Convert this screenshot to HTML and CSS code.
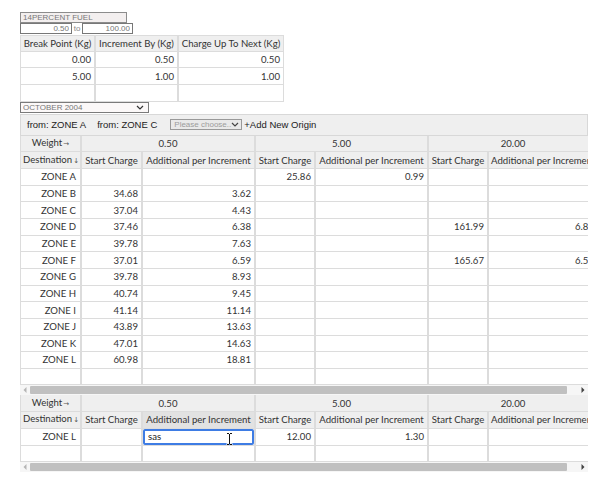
FILE: index.html
```html
<!DOCTYPE html>
<html lang="en">
<head>
<meta charset="utf-8">
<title>Fuel rates</title>
<link rel="stylesheet" href="styles.css">
</head>
<body>
<div class="fuel">
  <input class="fuel-name" type="text" value="14PERCENT FUEL">
  <div class="range">
    <input class="range-input range-from" type="text" value="0.50">
    <span class="to">to</span>
    <input class="range-input range-upto" type="text" value="100.00">
  </div>

  <table class="breaks">
    <colgroup><col class="b1"><col class="b2"><col class="b3"></colgroup>
    <thead>
      <tr><th>Break Point (Kg)</th><th>Increment By (Kg)</th><th>Charge Up To Next (Kg)</th></tr>
    </thead>
    <tbody>
      <tr><td>0.00</td><td>0.50</td><td>0.50</td></tr>
      <tr><td>5.00</td><td>1.00</td><td>1.00</td></tr>
      <tr><td></td><td></td><td></td></tr>
    </tbody>
  </table>

  <div class="select-wrap month">
    <select class="select"><option>OCTOBER 2004</option></select>
    <svg class="chev" width="8" height="5" viewBox="0 0 8 5"><path d="M1 1l3 3 3-3" fill="none" stroke="#333" stroke-width="1.2"/></svg>
  </div>

  <div class="origins">
    <span class="origin">from: ZONE A</span>
    <span class="origin">from: ZONE C</span>
    <span class="select-wrap choose">
      <select class="select"><option>Please choose..</option></select>
      <svg class="chev" width="8" height="5" viewBox="0 0 8 5"><path d="M1 1l3 3 3-3" fill="none" stroke="#444" stroke-width="1.2"/></svg>
    </span>
    <span class="add-origin">+Add New Origin</span>
  </div>

  <div class="grid-wrap">
    <table class="grid">
      <colgroup><col class="g-dest"><col class="g-sc"><col class="g-add"><col class="g-sc2"><col class="g-add"><col class="g-sc2"><col class="g-add3"></colgroup>
      <thead>
        <tr><th>Weight<span class="arr">→</span></th><th colspan="2">0.50</th><th colspan="2">5.00</th><th colspan="2">20.00</th></tr>
        <tr><th>Destination<span class="arr">↓</span></th><th>Start Charge</th><th>Additional per Increment</th><th>Start Charge</th><th>Additional per Increment</th><th>Start Charge</th><th>Additional per Increment</th></tr>
      </thead>
      <tbody>
        <tr><td>ZONE A</td><td></td><td></td><td>25.86</td><td>0.99</td><td></td><td></td></tr>
        <tr><td>ZONE B</td><td>34.68</td><td>3.62</td><td></td><td></td><td></td><td></td></tr>
        <tr><td>ZONE C</td><td>37.04</td><td>4.43</td><td></td><td></td><td></td><td></td></tr>
        <tr><td>ZONE D</td><td>37.46</td><td>6.38</td><td></td><td></td><td>161.99</td><td>6.85</td></tr>
        <tr><td>ZONE E</td><td>39.78</td><td>7.63</td><td></td><td></td><td></td><td></td></tr>
        <tr><td>ZONE F</td><td>37.01</td><td>6.59</td><td></td><td></td><td>165.67</td><td>6.59</td></tr>
        <tr><td>ZONE G</td><td>39.78</td><td>8.93</td><td></td><td></td><td></td><td></td></tr>
        <tr><td>ZONE H</td><td>40.74</td><td>9.45</td><td></td><td></td><td></td><td></td></tr>
        <tr><td>ZONE I</td><td>41.14</td><td>11.14</td><td></td><td></td><td></td><td></td></tr>
        <tr><td>ZONE J</td><td>43.89</td><td>13.63</td><td></td><td></td><td></td><td></td></tr>
        <tr><td>ZONE K</td><td>47.01</td><td>14.63</td><td></td><td></td><td></td><td></td></tr>
        <tr><td>ZONE L</td><td>60.98</td><td>18.81</td><td></td><td></td><td></td><td></td></tr>
        <tr><td></td><td></td><td></td><td></td><td></td><td></td><td></td></tr>
      </tbody>
    </table>
  </div>
  <div class="hscroll">
    <span class="sb-btn"><svg width="4" height="6" viewBox="0 0 4 6"><path d="M3.5 0v6L0.5 3z" fill="#b5b5b5"/></svg></span>
    <span class="sb-thumb"></span>
    <span class="sb-track"></span>
    <span class="sb-btn"><svg width="4" height="6" viewBox="0 0 4 6"><path d="M0.5 0v6l3-3z" fill="#444"/></svg></span>
  </div>

  <div class="grid-wrap">
    <table class="grid">
      <colgroup><col class="g-dest"><col class="g-sc"><col class="g-add"><col class="g-sc2"><col class="g-add"><col class="g-sc2"><col class="g-add3"></colgroup>
      <thead>
        <tr><th>Weight<span class="arr">→</span></th><th colspan="2">0.50</th><th colspan="2">5.00</th><th colspan="2">20.00</th></tr>
        <tr><th>Destination<span class="arr">↓</span></th><th>Start Charge</th><th class="hl">Additional per Increment</th><th>Start Charge</th><th>Additional per Increment</th><th>Start Charge</th><th>Additional per Increment</th></tr>
      </thead>
      <tbody>
        <tr><td>ZONE L</td><td></td><td class="editing"><input class="cell-input" type="text" value="sas"><svg class="ibeam" width="7" height="14" viewBox="0 0 7 14"><path d="M0.5 1.5h2.5M4 1.5h2.5M3.5 2v10M0.5 12.5h2.5M4 12.5h2.5" stroke="#fff" stroke-width="2.4" fill="none"/><path d="M1 1.5h2M4 1.5h2M3.5 2v10M1 12.5h2M4 12.5h2" stroke="#111" stroke-width="1" fill="none"/></svg></td><td>12.00</td><td>1.30</td><td></td><td></td></tr>
        <tr><td></td><td></td><td></td><td></td><td></td><td></td><td></td></tr>
      </tbody>
    </table>
  </div>
  <div class="hscroll">
    <span class="sb-btn"><svg width="4" height="6" viewBox="0 0 4 6"><path d="M3.5 0v6L0.5 3z" fill="#b5b5b5"/></svg></span>
    <span class="sb-thumb"></span>
    <span class="sb-track"></span>
    <span class="sb-btn"><svg width="4" height="6" viewBox="0 0 4 6"><path d="M0.5 0v6l3-3z" fill="#444"/></svg></span>
  </div>
</div>
</body>
</html>
```

FILE: styles.css
```css
html, body {
  margin: 0;
  background: #fff;
}
body {
  padding: 12px 20px 0;
  font-family: Lato, "Noto Sans", sans-serif;
  color: #333;
}
.fuel {
  width: 568px;
}
.fuel-name,
.range-input,
.select {
  display: block;
  box-sizing: border-box;
  height: 11px;
  margin: 0;
  padding: 0 2px;
  font-family: "Liberation Sans", Arial, sans-serif;
  font-size: 8px;
  line-height: 9px;
  color: #777;
  border: 1px solid #8c8c8c;
  border-radius: 0;
  outline: none;
}
.fuel-name {
  width: 107px;
  background: #f3efef;
}
.range {
  display: flex;
  align-items: flex-start;
  height: 12px;
}
.range-input {
  text-align: right;
  background: #fff;
  border-color: #777;
}
.range-from { width: 52px; }
.range-upto { width: 51px; }
.to {
  width: 10px;
  text-align: center;
  font-family: "Liberation Sans", Arial, sans-serif;
  font-size: 8px;
  line-height: 11px;
  color: #888;
}

/* tables */
table {
  border-collapse: separate;
  border-spacing: 0;
  table-layout: fixed;
  font-size: 9.6px;
}
th, td {
  box-sizing: border-box;
  border-left: 1px solid #dcdcdc;
  border-right: 1px solid #dcdcdc;
  border-bottom: 1px solid #dcdcdc;
  padding: 0 3px;
  line-height: 13px;
  white-space: nowrap;
  overflow: hidden;
  font-weight: normal;
}
tr { height: 16.67px; }
th {
  background: #efefef;
  text-align: center;
  color: #333;
  padding: 0 2px;
}
td {
  text-align: right;
  color: #333;
  background: #fff;
}
.breaks { width: 264px; }
.breaks thead th { border-top: 1px solid #dcdcdc; }
.b1 { width: 75px; }
.b2 { width: 83px; }
.b3 { width: 106px; }

.select-wrap {
  position: relative;
  display: block;
}
.select {
  appearance: none;
  -webkit-appearance: none;
  width: 100%;
  text-align: left;
}
.chev {
  position: absolute;
  top: 3px;
  right: 5px;
  pointer-events: none;
}
.month {
  width: 129px;
  margin-bottom: 1px;
}
.month .select {
  background: #fbf8f8;
  border-color: #7a7a7a;
}
.origins {
  box-sizing: border-box;
  height: 22px;
  display: flex;
  align-items: center;
  padding-left: 6px;
  background: #efefef;
  border: 1px solid #d8d8d8;
  font-family: "Liberation Sans", Arial, sans-serif;
  font-size: 9.5px;
  color: #222;
}
.origin { margin-right: 11px; }
.origin + .origin { margin-right: 13px; }
.choose {
  display: inline-block;
  width: 72px;
  margin-right: 2px;
}
.choose .select {
  background: #e9e9e9;
  border-color: #999;
  color: #9c9c9c;
  padding-left: 3px;
}
.choose .chev {
  top: 3px;
  right: 3px;
}

.grid-wrap {
  width: 568px;
  overflow: hidden;
}
.grid { width: 578px; }
.g-dest { width: 61px; }
.g-sc { width: 61px; }
.g-add { width: 113px; }
.g-sc2 { width: 60px; }
.g-add3 { width: 110px; }
.arr {
  font-family: "DejaVu Sans", sans-serif;
  font-size: 7px;
  margin-left: 1px;
  color: #555;
}
.grid td:first-child { padding-right: 4px; }
.grid th.hl { background: #e2e2e2; }
.editing {
  position: relative;
  padding: 0;
}
.cell-input {
  display: block;
  box-sizing: border-box;
  width: 100%;
  height: 16px;
  margin: 0;
  padding: 0 3px;
  border: 2px solid #3e7ce4;
  border-radius: 2px;
  font-family: Lato, "Noto Sans", sans-serif;
  font-size: 9.6px;
  color: #222;
  outline: none;
}
.ibeam {
  position: absolute;
  left: 83px;
  top: 3px;
}

.hscroll {
  width: 568px;
  height: 10px;
  display: flex;
  align-items: center;
  background: #f6f6f6;
}
.sb-btn {
  width: 10px;
  height: 10px;
  display: flex;
  align-items: center;
  justify-content: center;
}
.sb-thumb {
  width: 537px;
  height: 8px;
  background: #c0c0c0;
  border-radius: 1px;
}
.sb-track {
  flex: 1;
}
```
